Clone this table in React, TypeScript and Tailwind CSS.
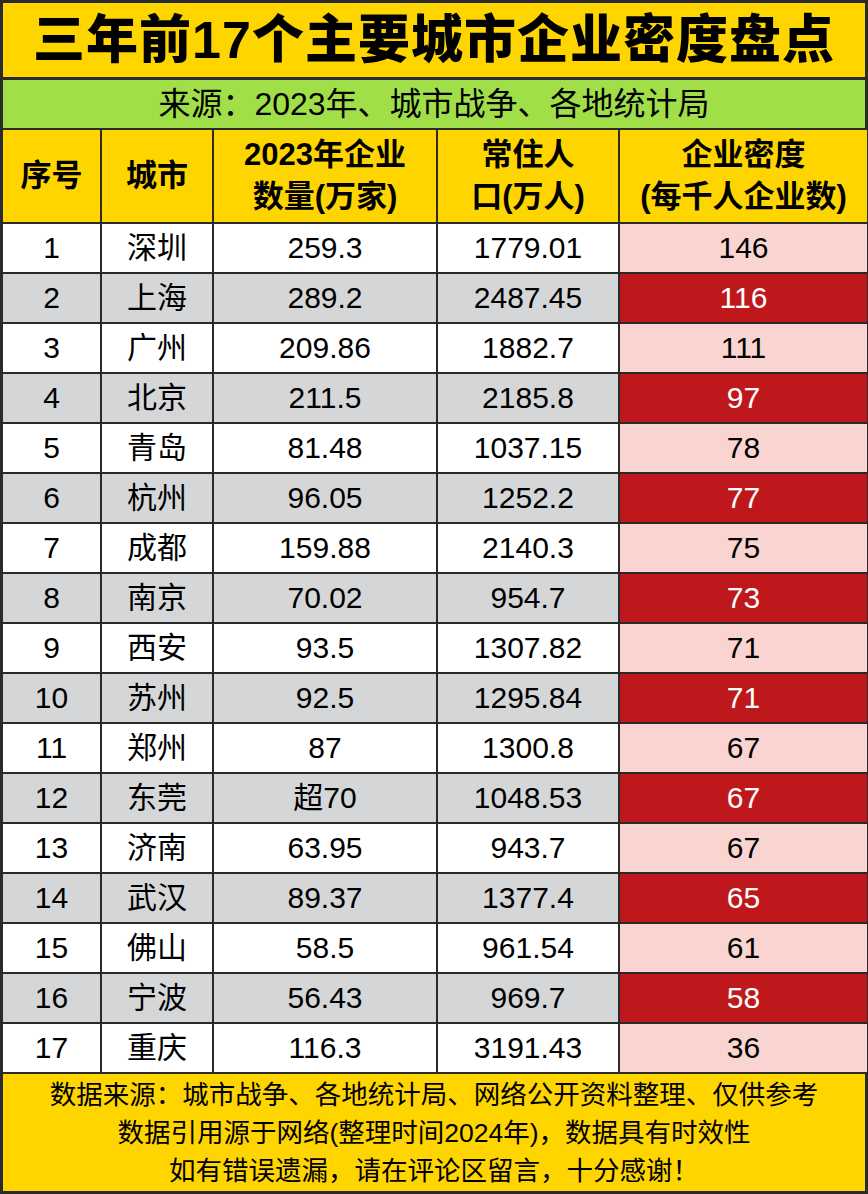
import React from "react";

const rows: [string, string, string, string, string][] = [
  ["1", "深圳", "259.3", "1779.01", "146"],
  ["2", "上海", "289.2", "2487.45", "116"],
  ["3", "广州", "209.86", "1882.7", "111"],
  ["4", "北京", "211.5", "2185.8", "97"],
  ["5", "青岛", "81.48", "1037.15", "78"],
  ["6", "杭州", "96.05", "1252.2", "77"],
  ["7", "成都", "159.88", "2140.3", "75"],
  ["8", "南京", "70.02", "954.7", "73"],
  ["9", "西安", "93.5", "1307.82", "71"],
  ["10", "苏州", "92.5", "1295.84", "71"],
  ["11", "郑州", "87", "1300.8", "67"],
  ["12", "东莞", "超70", "1048.53", "67"],
  ["13", "济南", "63.95", "943.7", "67"],
  ["14", "武汉", "89.37", "1377.4", "65"],
  ["15", "佛山", "58.5", "961.54", "61"],
  ["16", "宁波", "56.43", "969.7", "58"],
  ["17", "重庆", "116.3", "3191.43", "36"],
];

const font = { fontFamily: '"Liberation Sans", "Noto Sans CJK SC", sans-serif' };

export default function App() {
  return (
    <div
      className="w-[868px] h-[1194px] bg-[#2a2a2a] p-[3px] flex flex-col text-black"
      style={font}
    >
      <div className="h-[74px] bg-[#ffd500] flex items-center justify-center text-[52px] font-black tracking-[1px] leading-none">
        三年前17个主要城市企业密度盘点
      </div>
      <div className="h-[48px] mt-[3px] bg-[#a0df48] flex items-center justify-center text-[32px] leading-none">
        来源：2023年、城市战争、各地统计局
      </div>
      <div className="mt-[2px] grid grid-cols-[97px_110px_222px_180px_247px] gap-x-[2px] h-[92px]">
        <div className="bg-[#ffd500] flex items-center justify-center text-[31px] font-bold">序号</div>
        <div className="bg-[#ffd500] flex items-center justify-center text-[31px] font-bold">城市</div>
        <div className="bg-[#ffd500] flex flex-col items-center justify-center text-[31px] font-bold leading-[42px]">
          <span>2023年企业</span>
          <span>数量(万家)</span>
        </div>
        <div className="bg-[#ffd500] flex flex-col items-center justify-center text-[31px] font-bold leading-[42px]">
          <span>常住人</span>
          <span>口(万人)</span>
        </div>
        <div className="bg-[#ffd500] flex flex-col items-center justify-center text-[31px] font-bold leading-[42px]">
          <span>企业密度</span>
          <span>(每千人企业数)</span>
        </div>
      </div>
      {rows.map((r, i) => {
        const even = i % 2 === 1;
        const base = even ? "bg-[#d5d6d8]" : "bg-white";
        const last = even ? "bg-[#bf181c] text-white" : "bg-[#f9d4d0]";
        return (
          <div
            key={r[0]}
            className="mt-[2px] grid grid-cols-[97px_110px_222px_180px_247px] gap-x-[2px] h-[48px] text-[30px] leading-none"
          >
            <div className={`${base} flex items-center justify-center`}>{r[0]}</div>
            <div className={`${base} flex items-center justify-center`}>{r[1]}</div>
            <div className={`${base} flex items-center justify-center`}>{r[2]}</div>
            <div className={`${base} flex items-center justify-center`}>{r[3]}</div>
            <div className={`${last} flex items-center justify-center`}>{r[4]}</div>
          </div>
        );
      })}
      <div className="mt-[2px] flex-1 bg-[#ffd500] flex flex-col items-center justify-center text-[26.5px] leading-[38px]">
        <span>数据来源：城市战争、各地统计局、网络公开资料整理、仅供参考</span>
        <span>数据引用源于网络(整理时间2024年)，数据具有时效性</span>
        <span>如有错误遗漏，请在评论区留言，十分感谢！</span>
      </div>
    </div>
  );
}
